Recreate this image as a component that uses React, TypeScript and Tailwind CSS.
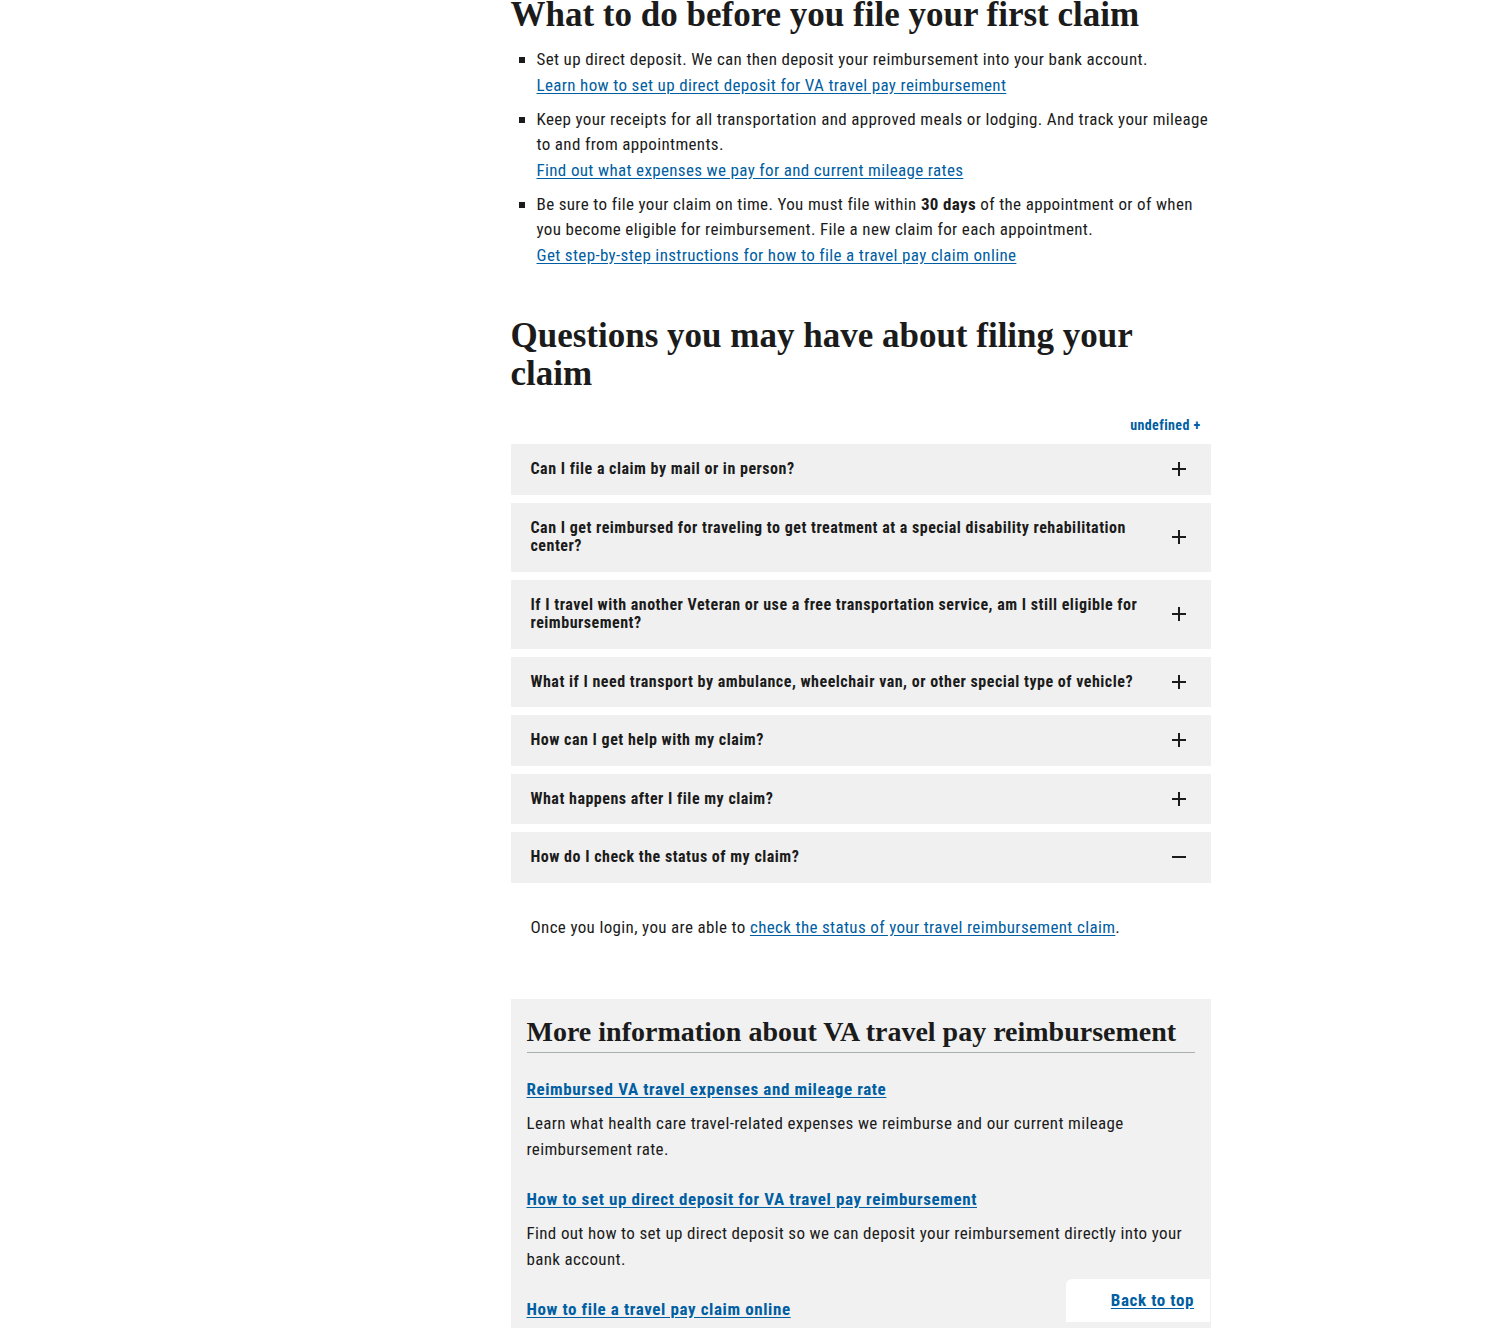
import { useState } from 'react';

interface Faq {
  q: string;
  a?: React.ReactNode;
}

const sans = "font-['Liberation_Sans_Narrow','Roboto_Condensed','Liberation_Sans',sans-serif]";
const serif = "font-['Liberation_Serif',serif]";

const faqs: Faq[] = [
  { q: 'Can I file a claim by mail or in person?' },
  { q: 'Can I get reimbursed for traveling to get treatment at a special disability rehabilitation center?' },
  { q: 'If I travel with another Veteran or use a free transportation service, am I still eligible for reimbursement?' },
  { q: 'What if I need transport by ambulance, wheelchair van, or other special type of vehicle?' },
  { q: 'How can I get help with my claim?' },
  { q: 'What happens after I file my claim?' },
  {
    q: 'How do I check the status of my claim?',
    a: (
      <>
        Once you login, you are able to{' '}
        <a href="#" className="text-[#005ea2] underline underline-offset-2">
          check the status of your travel reimbursement claim
        </a>
        .
      </>
    ),
  },
];

const PlusIcon = () => (
  <svg width="16" height="16" viewBox="0 0 16 16" fill="none" stroke="#1b1b1b" strokeWidth="2">
    <path d="M8 1v14M1 8h14" />
  </svg>
);

const MinusIcon = () => (
  <svg width="16" height="16" viewBox="0 0 16 16" fill="none" stroke="#1b1b1b" strokeWidth="2">
    <path d="M1 8h14" />
  </svg>
);

const AccordionItem = ({ faq, open, onToggle }: { faq: Faq; open: boolean; onToggle: () => void }) => (
  <div className="mb-2">
    <button
      onClick={onToggle}
      className="flex w-full items-center justify-between bg-[#f0f0f0] py-4 pl-5 pr-6 text-left"
    >
      <span className="pr-6 text-[16px] font-bold leading-[18.5px] tracking-[0.5px] text-[#1b1b1b]">{faq.q}</span>
      <span className="shrink-0">{open ? <MinusIcon /> : <PlusIcon />}</span>
    </button>
    {open && faq.a && (
      <div className="px-5 pt-8 pb-6 text-[17px] leading-[25.5px] tracking-[0.35px] text-[#1b1b1b]">{faq.a}</div>
    )}
  </div>
);

const bullets = [
  {
    text: <>Set up direct deposit. We can then deposit your reimbursement into your bank account.</>,
    link: 'Learn how to set up direct deposit for VA travel pay reimbursement',
  },
  {
    text: <>Keep your receipts for all transportation and approved meals or lodging. And track your mileage to and from appointments.</>,
    link: 'Find out what expenses we pay for and current mileage rates',
  },
  {
    text: (
      <>
        Be sure to file your claim on time. You must file within <strong>30 days</strong> of the appointment or of when
        you become eligible for reimbursement. File a new claim for each appointment.
      </>
    ),
    link: 'Get step-by-step instructions for how to file a travel pay claim online',
  },
];

const moreInfo = [
  {
    title: 'Reimbursed VA travel expenses and mileage rate',
    desc: 'Learn what health care travel-related expenses we reimburse and our current mileage reimbursement rate.',
  },
  {
    title: 'How to set up direct deposit for VA travel pay reimbursement',
    desc: 'Find out how to set up direct deposit so we can deposit your reimbursement directly into your bank account.',
  },
  {
    title: 'How to file a travel pay claim online',
    desc: 'Learn how to file a claim for reimbursement of travel costs online.',
  },
];

export default function App() {
  const [openIdx, setOpenIdx] = useState<number | null>(6);

  return (
    <div className={`relative h-[1328px] overflow-hidden bg-white text-[#1b1b1b] ${sans}`}>
      <div className="mx-auto flex w-[1000px]">
        <div className="w-[256px] shrink-0" />
        <main className="w-[700px] shrink-0">
          <h2 className={`-mt-[5px] text-[35px] font-bold leading-[39px] ${serif}`}>
            What to do before you file your first claim
          </h2>

          <ul className="mt-[13px] pl-[26px]">
            {bullets.map((b, i) => (
              <li key={i} className="relative mb-[8.5px] text-[17px] leading-[25.5px] tracking-[0.35px]">
                <span className="absolute -left-[18px] top-[10px] h-[6px] w-[6px] bg-[#1b1b1b]" />
                <div>{b.text}</div>
                <a href="#" className="text-[#005ea2] underline underline-offset-2">
                  {b.link}
                </a>
              </li>
            ))}
          </ul>

          <h2 className={`mt-[49px] text-[35px] font-bold leading-[38px] ${serif}`}>
            Questions you may have about filing your claim
          </h2>

          <div className="mt-[24px] flex justify-end pr-[10px]">
            <button className="text-[14px] font-bold leading-[16px] tracking-[0.4px] text-[#005ea2]">undefined +</button>
          </div>

          <div className="mt-[11px]">
            {faqs.map((f, i) => (
              <AccordionItem
                key={i}
                faq={f}
                open={openIdx === i}
                onToggle={() => setOpenIdx(openIdx === i ? null : i)}
              />
            ))}
          </div>

          <section className="mt-[35px] bg-[#f1f1f1] px-4 pt-[16px] pb-8">
            <h2 className={`border-b border-[#a9aeb1] pb-[3px] text-[28px] font-bold leading-[34px] ${serif}`}>
              More information about VA travel pay reimbursement
            </h2>
            <div className="mt-[24px]">
              {moreInfo.map((m, i) => (
                <div key={i} className="mb-[25px]">
                  <a
                    href="#"
                    className="text-[17px] font-bold leading-[25px] tracking-[0.6px] text-[#005ea2] underline underline-offset-2"
                  >
                    {m.title}
                  </a>
                  <p className="mt-[9px] text-[17px] leading-[25.5px] tracking-[0.35px]">{m.desc}</p>
                </div>
              ))}
            </div>
          </section>
        </main>
      </div>

      <div className="absolute left-[1066px] top-[1279px] flex h-[43px] w-[144px] items-center justify-end rounded-tl-md bg-white pr-4">
        <a href="#" className="text-[17px] font-bold tracking-[0.6px] text-[#005ea2] underline underline-offset-2">
          Back to top
        </a>
      </div>
    </div>
  );
}
